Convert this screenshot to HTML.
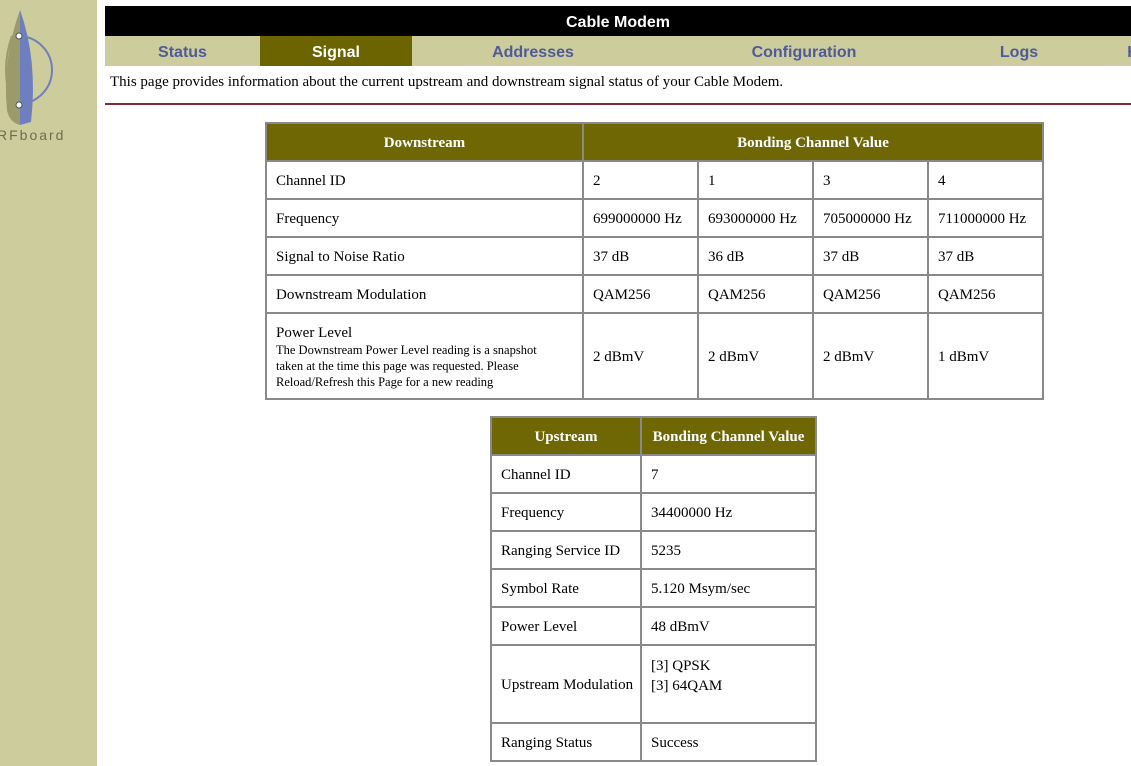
<!DOCTYPE html>
<html><head><style>
body{margin:0;width:1131px;height:766px;overflow:hidden;background:#fff;position:relative;font-family:"Liberation Serif",serif;font-size:15px;color:#000}
.a{position:absolute}
.side{left:0;top:0;width:97px;height:766px;background:#cdcc9c}
.bar{left:105px;top:6px;width:1026px;height:30px;background:#000;color:#fff;font:bold 16px "Liberation Sans",sans-serif;line-height:33px;text-align:center}
.nav{left:105px;top:36px;width:1026px;height:30px;background:#cdcc9c}
.t{top:36px;height:30px;text-align:center;font:bold 16px "Liberation Sans",sans-serif;line-height:33px;color:#4f5a99}
.c{box-sizing:border-box;border:1px solid #8a8a8a;padding-left:9px;padding-top:3px;display:flex;align-items:center}
.h{background:#6e6704;color:#fff;font-weight:bold;justify-content:center;padding:3px 0 0}
</style></head><body>
<div class="a side"></div>
<svg class="a" style="left:0;top:0" width="97" height="150">
<path d="M7 110 Q2 60 20 10 L20 125 Q9 122 7 110Z" fill="#9a9a6a"/>
<path d="M20 10 Q38 60 31 122 L20 125Z" fill="#6d7fbf"/>
<path d="M18 36 A34 34 0 0 1 18 104" fill="none" stroke="#6d7fbf" stroke-width="2"/>
<path d="M12 36 Q0 70 12 104" fill="none" stroke="#9a9a6a" stroke-width="2"/>
<circle cx="19" cy="36" r="3" fill="#fff" stroke="#555"/><circle cx="19" cy="105" r="3" fill="#fff" stroke="#555"/>
<text x="-3" y="140" font-family="Liberation Sans" font-size="14" fill="#6d6d50" letter-spacing="2">RFboard</text>
</svg>
<div class="a bar">Cable Modem</div>
<div class="a nav"></div>
<div class="a t" style="left:105px;width:155px">Status</div>
<div class="a t" style="left:260px;width:152px;background:#6b6400;color:#fff">Signal</div>
<div class="a t" style="left:412px;width:242px">Addresses</div>
<div class="a t" style="left:654px;width:300px">Configuration</div>
<div class="a t" style="left:954px;width:130px">Logs</div>
<div class="a t" style="left:1118px;width:30px">H</div>
<div class="a" style="left:110px;top:74px">This page provides information about the current upstream and downstream signal status of your Cable Modem.</div>
<div class="a" style="left:105px;top:103px;width:1026px;height:2px;background:#7d2b36"></div>

<div class="a" style="left:265px;top:122px;width:779px;height:278px;border:1px solid #8a8a8a;box-sizing:border-box"></div>
<div class="a c h" style="left:266px;top:123px;width:317px;height:38px">Downstream</div>
<div class="a c h" style="left:583px;top:123px;width:460px;height:38px">Bonding Channel Value</div>
<div id="ds"></div>
<div class="a" style="left:490px;top:416px;width:327px;height:346px;border:1px solid #8a8a8a;box-sizing:border-box"></div>
<div class="a c h" style="left:491px;top:417px;width:150px;height:38px">Upstream</div>
<div class="a c h" style="left:641px;top:417px;width:175px;height:38px">Bonding Channel Value</div>
<div id="us"></div>
<script>
var ds=[["Channel ID","2","1","3","4"],["Frequency","699000000 Hz","693000000 Hz","705000000 Hz","711000000 Hz"],["Signal to Noise Ratio","37 dB","36 dB","37 dB","37 dB"],["Downstream Modulation","QAM256","QAM256","QAM256","QAM256"],["Power Level<br><span style='font-size:12.5px;line-height:16px;display:block'>The Downstream Power Level reading is a snapshot taken at the time this page was requested. Please Reload/Refresh this Page for a new reading</span>","2 dBmV","2 dBmV","2 dBmV","1 dBmV"]];
var xs=[266,583,698,813,928,1043],ys=[161,199,237,275,313,399],h="";
ds.forEach(function(r,i){r.forEach(function(v,j){h+='<div class="a c" style="left:'+xs[j]+'px;top:'+ys[i]+'px;width:'+(xs[j+1]-xs[j])+'px;height:'+(ys[i+1]-ys[i])+'px'+(j==0&&i==4?';display:block;padding-top:10px;line-height:18px;padding-right:26px':'')+'">'+v+'</div>'});});
document.getElementById('ds').outerHTML=h;
var us=[["Channel ID","7"],["Frequency","34400000 Hz"],["Ranging Service ID","5235"],["Symbol Rate","5.120 Msym/sec"],["Power Level","48 dBmV"],["Upstream Modulation","[3] QPSK<br>[3] 64QAM"],["Ranging Status","Success"]];
var ux=[491,641,816],uy=[455,493,531,569,607,645,723,761];h="";
us.forEach(function(r,i){r.forEach(function(v,j){h+='<div class="a c" style="left:'+ux[j]+'px;top:'+uy[i]+'px;width:'+(ux[j+1]-ux[j])+'px;height:'+(uy[i+1]-uy[i])+'px'+(j==1&&i==5?';display:block;padding-top:10px;line-height:20px':'')+'">'+v+'</div>'});});
document.getElementById('us').outerHTML=h;
</script>
</body></html>
